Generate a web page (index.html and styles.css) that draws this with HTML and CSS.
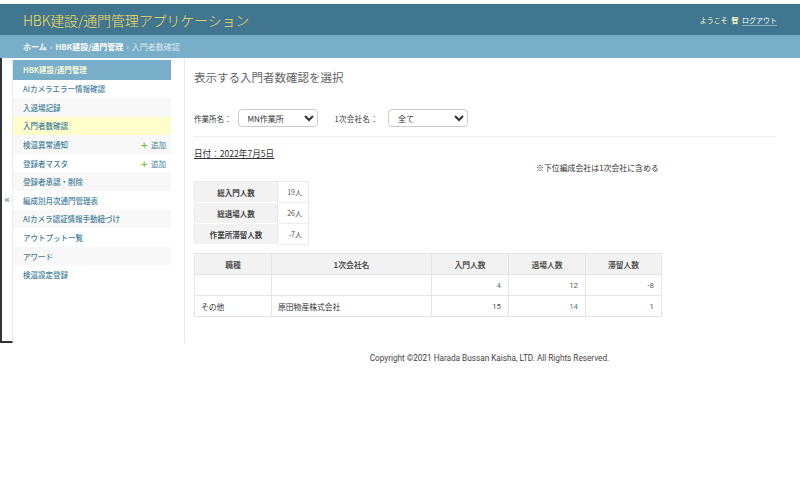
FILE: index.html
```html
<!DOCTYPE html>
<html lang="ja">
<head>
<meta charset="utf-8">
<title>入門者数確認</title>
<link rel="stylesheet" href="styles.css">
</head>
<body>
<div class="header">
  <div class="branding">HBK建設/通門管理アプリケーション</div>
  <div class="user-tools">ようこそ <strong>智</strong> <a href="#">ログアウト</a></div>
</div>
<div class="breadcrumbs"><a href="#">ホーム</a><span class="sep">›</span><a href="#">HBK建設/通門管理</a><span class="sep">›</span><span class="current">入門者数確認</span></div>
<div class="main">
  <button class="toggle">«</button>
  <nav class="sidebar">
    <div class="module">
      <div class="caption">HBK建設/通門管理</div>
      <div class="row"><a href="#">AIカメラエラー情報確認</a></div>
      <div class="row alt"><a href="#">入退場記録</a></div>
      <div class="row current"><a href="#">入門者数確認</a></div>
      <div class="row alt"><a href="#">検温異常通知</a><a class="add" href="#"><span class="plus">+</span>追加</a></div>
      <div class="row"><a href="#">登録者マスタ</a><a class="add" href="#"><span class="plus">+</span>追加</a></div>
      <div class="row alt"><a href="#">登録者承認・削除</a></div>
      <div class="row"><a href="#">編成別月次通門管理表</a></div>
      <div class="row alt"><a href="#">AIカメラ認証情報手動紐づけ</a></div>
      <div class="row"><a href="#">アウトプット一覧</a></div>
      <div class="row alt"><a href="#">アワード</a></div>
      <div class="row"><a href="#">検温設定登録</a></div>
    </div>
  </nav>
  <div class="content">
    <h1>表示する入門者数確認を選択</h1>
    <div class="filters">
      <label>作業所名：</label>
      <select class="sel"><option>MN作業所</option></select>
      <label class="second">1次会社名：</label>
      <select class="sel"><option>全て</option></select>
    </div>
    <hr class="rule">
    <div class="date">日付：2022年7月5日</div>
    <div class="notice">※下位編成会社は1次会社に含める</div>
    <table class="summary">
      <tr><th>総入門人数</th><td>19人</td></tr>
      <tr><th>総退場人数</th><td>26人</td></tr>
      <tr><th>作業所滞留人数</th><td>-7人</td></tr>
    </table>
    <table class="detail">
      <thead>
        <tr><th class="c1">職種</th><th class="c2">1次会社名</th><th class="c3">入門人数</th><th class="c4">退場人数</th><th class="c5">滞留人数</th></tr>
      </thead>
      <tbody>
        <tr><td></td><td></td><td class="num"><a href="#">4</a></td><td class="num">12</td><td class="num">-8</td></tr>
        <tr><td>その他</td><td>原田物産株式会社</td><td class="num">15</td><td class="num"><a href="#">14</a></td><td class="num">1</td></tr>
      </tbody>
    </table>
  </div>
</div>
<div class="footer">Copyright ©2021 Harada Bussan Kaisha, LTD. All Rights Reserved.</div>
</body>
</html>
```
FILE: styles.css
```css
* { box-sizing: border-box; }
body {
  margin: 0;
  background: #fff;
  font-family: Roboto, "Noto Sans CJK JP", sans-serif;
  color: #333;
}
a { text-decoration: none; color: #447e9b; }

.header {
  margin-top: 4px;
  height: 31px;
  background: #417690;
  display: flex;
  align-items: center;
  justify-content: space-between;
  padding: 0 23px;
}
.branding {
  font-family: "Noto Sans CJK JP", sans-serif;
  font-size: 14px;
  font-weight: 300;
  color: #f5dd5d;
  letter-spacing: -0.15px;
}
.user-tools {
  font-family: "Noto Sans CJK JP", sans-serif;
  font-size: 7px;
  color: #ffc;
}
.user-tools strong { font-weight: 700; margin: 0 2px; }
.user-tools a {
  color: #fff;
  border-bottom: 1px solid rgba(255,255,255,0.4);
}

.breadcrumbs {
  height: 23px;
  background: #79aec8;
  display: flex;
  align-items: center;
  padding-left: 23px;
  font-family: "Noto Sans CJK JP", sans-serif;
  font-size: 8px;
  color: #c4dce8;
}
.breadcrumbs a { color: #fff; font-weight: 700; }
.breadcrumbs .sep { margin: 0 3px; color: #e0eef5; }
.breadcrumbs .current { color: #d6e8f1; }

.main { display: flex; }
.toggle {
  width: 13px;
  padding: 0;
  margin: 0;
  border: 0;
  border-left: 2px solid #333;
  border-bottom: 2px solid #333;
  border-right: 1px solid #eaeaea;
  background: #fff;
  color: #447e9b;
  font-size: 10px;
  font-family: "DejaVu Sans", sans-serif;
  display: flex;
  align-items: center;
  justify-content: center;
}
.sidebar {
  width: 172px;
  padding-top: 2px;
  border-right: 1px solid #eaeaea;
}
.module { width: 158px; }
.caption {
  height: 19.5px;
  background: #79aec8;
  color: #f8f8dc;
  font-family: "Noto Sans CJK JP", sans-serif;
  font-size: 7.5px;
  font-weight: 700;
  padding-left: 10px;
  display: flex;
  align-items: center;
}
.row {
  height: 18.6px;
  display: flex;
  align-items: center;
  justify-content: space-between;
  padding: 0 5px 0 10px;
  background: #fff;
  font-family: "Noto Sans CJK JP", sans-serif;
  font-size: 7.5px;
  font-weight: 500;
}
.row.alt { background: #f8f8f8; }
.row.current { background: #ffc; }
.row .add { font-weight: 400; }
.row .plus {
  color: #70bf2b;
  font-family: "DejaVu Sans", sans-serif;
  font-weight: 700;
  font-size: 9px;
  margin-right: 3px;
}

.content {
  flex: 1;
  padding: 12px 24px 26px 9px;
  font-family: "Noto Sans CJK JP", sans-serif;
}
h1 {
  margin: 0;
  font-size: 11.5px;
  line-height: 14px;
  font-weight: 400;
  color: #666;
}
.filters {
  margin-top: 25px;
  display: flex;
  align-items: center;
  font-size: 7.5px;
  color: #333;
}
.filters label { margin-right: 6px; }
.filters .second { margin-left: 17px; margin-right: 10px; letter-spacing: 0.3px; }
.sel {
  width: 80px;
  height: 18px;
  font-family: "Noto Sans CJK JP", sans-serif;
  font-size: 8px;
  color: #333;
  border: 1px solid #ccc;
  border-radius: 4px;
  background: #fff;
  padding: 0 0 0 5px;
}
.rule {
  margin: 9px 0 0;
  border: 0;
  border-top: 1px solid #eee;
}
.date {
  margin-top: 10px;
  font-size: 8.6px;
  line-height: 12px;
  color: #333;
  text-decoration: underline;
  display: inline-block;
}
.notice {
  margin: 0 0 0 342px;
  font-size: 7.9px;
  line-height: 12px;
  color: #333;
}
table {
  border-collapse: collapse;
  font-family: "Noto Sans CJK JP", sans-serif;
}
.summary {
  margin-top: 7px;
  width: 115px;
  table-layout: fixed;
  border: 1px solid #eaeaea;
}
.summary th {
  width: 83px;
  height: 21px;
  background: #f2f2f2;
  font-size: 7.5px;
  color: #444;
  font-weight: 700;
  text-align: center;
  border-bottom: 1px solid #fff;
  border-right: 1px solid #e6e6e6;
  padding: 0;
}
.summary td {
  text-align: right;
  font-size: 7px;
  color: #555;
  padding: 0 6px 0 0;
  border-bottom: 1px solid #eee;
}
.detail {
  margin-top: 8px;
  width: 467px;
  table-layout: fixed;
  border: 1px solid #e4e4e4;
}
.detail th {
  height: 21px;
  background: #f2f2f2;
  font-size: 7.8px;
  font-weight: 700;
  color: #555;
  text-align: center;
  border-right: 1px solid #e4e4e4;
  border-bottom: 1px solid #e4e4e4;
  padding: 0;
}
.detail .c1 { width: 77px; }
.detail .c2 { width: 160px; }
.detail .c3 { width: 77px; }
.detail .c4 { width: 77px; }
.detail .c5 { width: 76px; }
.detail td {
  height: 21px;
  font-size: 7.8px;
  color: #333;
  padding: 0 0 0 6px;
  border-right: 1px solid #e4e4e4;
  border-bottom: 1px solid #e4e4e4;
}
.detail td.num {
  text-align: right;
  padding: 0 7px 0 0;
  font-family: Roboto, sans-serif;
  color: #555;
}

.footer {
  padding: 10px 0 0 179px;
  text-align: center;
  font-family: Roboto, sans-serif;
  font-size: 8.2px;
  line-height: 10px;
  color: #444;
}
```
